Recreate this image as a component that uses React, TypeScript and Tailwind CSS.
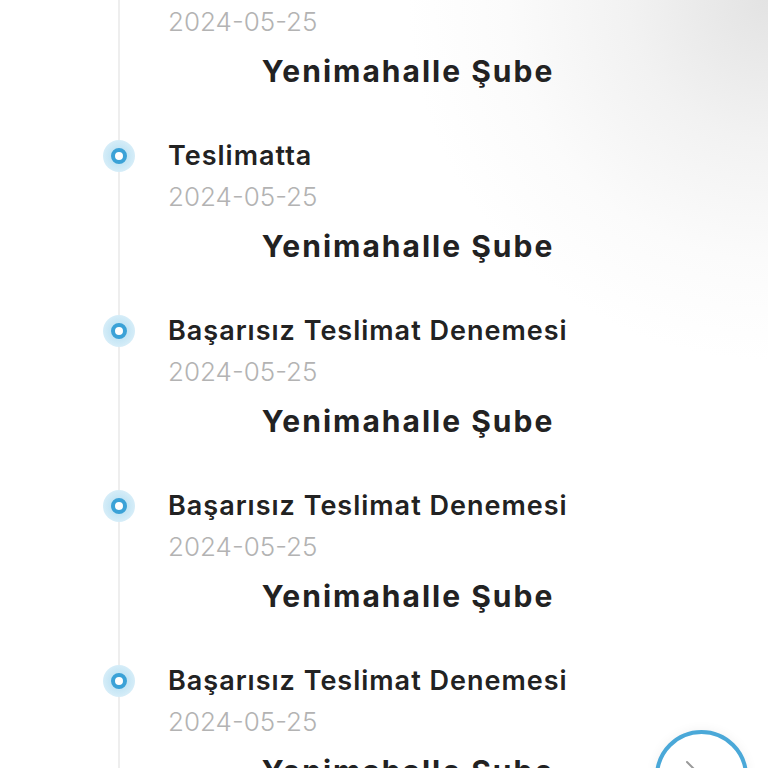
interface TrackingStep {
  status: string;
  date: string;
  branch: string;
}

const steps: TrackingStep[] = [
  { status: "Yolda", date: "2024-05-25", branch: "Yenimahalle Şube" },
  { status: "Teslimatta", date: "2024-05-25", branch: "Yenimahalle Şube" },
  { status: "Başarısız Teslimat Denemesi", date: "2024-05-25", branch: "Yenimahalle Şube" },
  { status: "Başarısız Teslimat Denemesi", date: "2024-05-25", branch: "Yenimahalle Şube" },
  { status: "Başarısız Teslimat Denemesi", date: "2024-05-25", branch: "Yenimahalle Şube" },
];

function Dot() {
  return (
    <div className="w-8 h-8 rounded-full bg-[radial-gradient(circle,#c6e6f5_40%,#e6f4fb_100%)] flex items-center justify-center">
      <div className="w-4 h-4 rounded-full border-[4px] border-[#3ba2d7] bg-white" />
    </div>
  );
}

export default function App() {
  return (
    <div
      className="relative w-[768px] h-[768px] overflow-hidden bg-[radial-gradient(circle_at_100%_0%,#e3e3e3_0px,#f2f2f2_140px,#fbfbfb_260px,#ffffff_360px)]"
      style={{ fontFamily: "Inter, 'Noto Sans', sans-serif" }}
    >
      {/* Timeline line */}
      <div className="absolute left-[118px] top-0 bottom-0 w-[2px] bg-[#eeeeee]" />

      <div className="relative mt-[-39px] pl-[103px] pr-[120px]">
        {steps.map((step, idx) => (
          <div key={idx} className="flex h-[175px]">
            <div className="w-8 h-[40px] flex items-center shrink-0">
              <Dot />
            </div>
            <div className="flex-1 ml-[33px]">
              <div className="h-[40px] leading-[40px] text-[27px] font-semibold text-[#222222] tracking-[1px] whitespace-nowrap">
                {step.status}
              </div>
              <div className="h-[42px] leading-[42px] text-[26px] font-light text-[#b3b3b3]">
                {step.date}
              </div>
              <div className="h-[56px] leading-[56px] text-[30px] font-bold text-[#222222] tracking-[2px] text-center whitespace-nowrap">
                {step.branch}
              </div>
            </div>
          </div>
        ))}
      </div>

      {/* Floating button */}
      <div className="absolute left-[655px] top-[730px] w-[93px] h-[93px] rounded-full border-[4px] border-[#4aa8d8] bg-white shadow-[0_0_12px_rgba(0,0,0,0.06)]" />
      <svg
        className="absolute left-[680px] top-[755px]"
        width="30"
        height="44"
        viewBox="0 0 30 44"
        fill="none"
      >
        <polyline points="7,7 22,22 7,37" stroke="#9a9a9a" strokeWidth="2" strokeLinecap="round" strokeLinejoin="round" />
      </svg>
    </div>
  );
}
